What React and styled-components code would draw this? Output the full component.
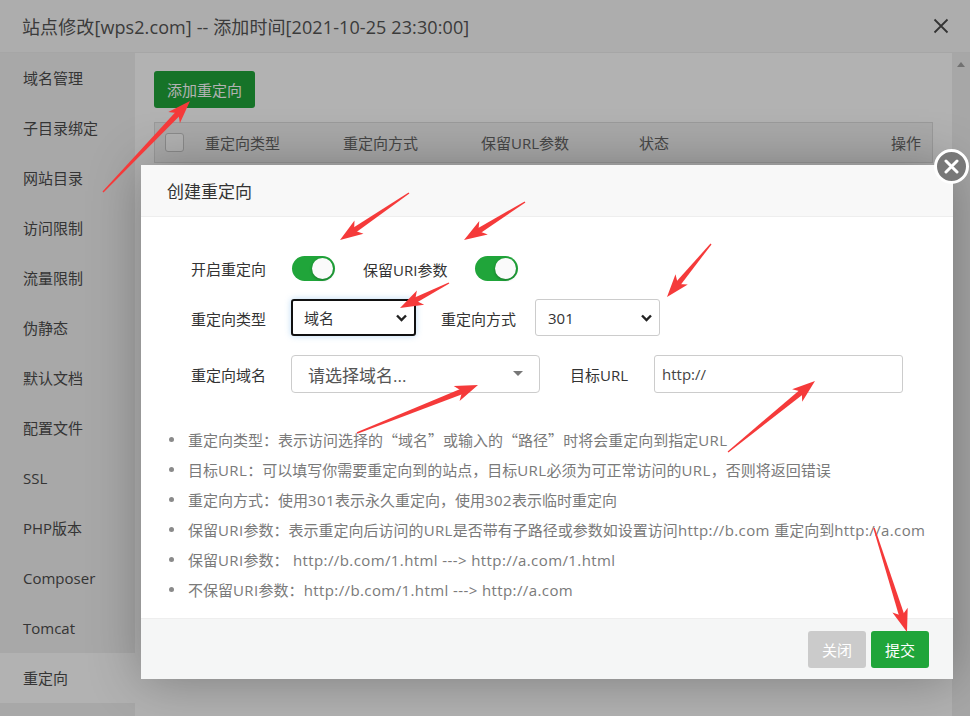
import React from "react";
import styled, { createGlobalStyle } from "styled-components";

const GlobalStyle = createGlobalStyle`
  html, body {
    margin: 0;
    padding: 0;
  }
  body {
    font-family: "Open Sans", "Noto Sans CJK SC", sans-serif;
    color: #333;
    overflow: hidden;
  }
  * {
    box-sizing: border-box;
  }
`;

const menu = [
    "域名管理",
    "子目录绑定",
    "网站目录",
    "访问限制",
    "流量限制",
    "伪静态",
    "默认文档",
    "配置文件",
    "SSL",
    "PHP版本",
    "Composer",
    "Tomcat",
    "重定向",
];

const tips = [
    "重定向类型：表示访问选择的“域名”或输入的“路径”时将会重定向到指定URL",
    "目标URL：可以填写你需要重定向到的站点，目标URL必须为可正常访问的URL，否则将返回错误",
    "重定向方式：使用301表示永久重定向，使用302表示临时重定向",
    "保留URI参数：表示重定向后访问的URL是否带有子路径或参数如设置访问http://b.com 重定向到http://a.com",
    "保留URI参数： http://b.com/1.html ---> http://a.com/1.html",
    "不保留URI参数：http://b.com/1.html ---> http://a.com",
];

// annotation arrows: [tail, tip]
const arrows = [
    [[103, 192], [190, 101]],
    [[409, 193], [340, 240]],
    [[525, 202], [464, 240]],
    [[449, 283], [400, 308]],
    [[711, 244], [667, 297]],
    [[357, 433], [478, 385]],
    [[728, 452], [815, 381]],
    [[874, 528], [907, 632]],
];

const arrowShapes = ([tx, ty], [px, py]) => {
    const len = Math.hypot(px - tx, py - ty);
    const dx = (px - tx) / len;
    const dy = (py - ty) / len;
    const nx = -dy;
    const ny = dx;
    const at = (s, w) =>
        `${(px - dx * s + nx * w).toFixed(1)},${(py - dy * s + ny * w).toFixed(1)}`;
    const shaft = [at(len, 0.7), at(16, 2.8), at(16, -2.8), at(len, -0.7)].join(" ");
    const head = [at(0, 0), at(23, 8), at(17, 0), at(23, -8)].join(" ");
    return { shaft, head };
};

const renderTip = (text) =>
    text.split(/([\x20-\x7e]+|[“”]+)/).map((part, i) => {
        if (!part) return null;
        if (/^[“”]+$/.test(part)) return <Quote key={i}>{part}</Quote>;
        if (/^[\x20-\x7e]+$/.test(part)) return <Latin key={i}>{part}</Latin>;
        return part;
    });

const Chevron = () => (
    <svg width="13" height="13" viewBox="0 0 13 13">
        <path d="M2 4.5 L6.5 9 L11 4.5" fill="none" stroke="#222" strokeWidth="2.4" />
    </svg>
);

const App = () => {
    return (
        <>
            <GlobalStyle />
            <Frame>
                <TitleBar>
                    <Title>站点修改[wps2.com] -- 添加时间[2021-10-25 23:30:00]</Title>
                    <svg width="16" height="16" viewBox="0 0 16 16">
                        <path d="M1.5 1.5 L14.5 14.5 M14.5 1.5 L1.5 14.5" stroke="#4a4a4a" strokeWidth="1.8" />
                    </svg>
                </TitleBar>
                <Main>
                    <Sidebar>
                        {menu.map((item) => (
                            <SideItem key={item} $active={item === "重定向"}>
                                {item}
                            </SideItem>
                        ))}
                    </Sidebar>
                    <Content>
                        <AddButton>添加重定向</AddButton>
                        <TableHead>
                            <CheckCell>
                                <CheckBox />
                            </CheckCell>
                            <HeadCell>重定向类型</HeadCell>
                            <HeadCell>重定向方式</HeadCell>
                            <HeadCell>保留URL参数</HeadCell>
                            <HeadCell>状态</HeadCell>
                            <HeadCell $right>操作</HeadCell>
                        </TableHead>
                    </Content>
                    <ScrollTrack>
                        <ScrollArrow />
                    </ScrollTrack>
                </Main>
                <Shade />
                <Modal>
                    <ModalHeader>创建重定向</ModalHeader>
                    <ModalBody>
                        <FormRow $top={0} $height={36}>
                            <Label $width={101}>开启重定向</Label>
                            <Toggle>
                                <Knob />
                            </Toggle>
                            <Label $width={112} $gap={28} $shift={2}>
                                保留URI参数
                            </Label>
                            <Toggle>
                                <Knob />
                            </Toggle>
                        </FormRow>
                        <FormRow $top={13} $height={37}>
                            <Label $width={100} $shift={2}>
                                重定向类型
                            </Label>
                            <Select $focused>
                                <span>域名</span>
                                <Chevron />
                            </Select>
                            <Label $width={94} $gap={25} $shift={2}>
                                重定向方式
                            </Label>
                            <Select>
                                <span>301</span>
                                <Chevron />
                            </Select>
                        </FormRow>
                        <FormRow $top={19} $height={38}>
                            <Label $width={100} $shift={1}>
                                重定向域名
                            </Label>
                            <DomainPicker>
                                <span>请选择域名...</span>
                                <Caret />
                            </DomainPicker>
                            <Label $width={84} $gap={30} $shift={1}>
                                目标URL
                            </Label>
                            <TextInput>http://</TextInput>
                        </FormRow>
                        <TipList>
                            {tips.map((tip, i) => (
                                <Tip key={i}>
                                    <Bullet />
                                    <span>{renderTip(tip)}</span>
                                </Tip>
                            ))}
                        </TipList>
                    </ModalBody>
                    <ModalFooter>
                        <FooterButton $variant="muted">关闭</FooterButton>
                        <FooterButton>提交</FooterButton>
                    </ModalFooter>
                    <CloseCircle>
                        <svg width="15" height="15" viewBox="0 0 15 15">
                            <path d="M2 2 L13 13 M13 2 L2 13" stroke="#fff" strokeWidth="3" strokeLinecap="round" />
                        </svg>
                    </CloseCircle>
                </Modal>
                <Annotations width="970" height="716" viewBox="0 0 970 716">
                    {arrows.map(([tail, tip], i) => {
                        const { shaft, head } = arrowShapes(tail, tip);
                        return (
                            <g key={i} fill="#f53a3a">
                                <polygon points={shaft} />
                                <polygon points={head} />
                            </g>
                        );
                    })}
                </Annotations>
            </Frame>
        </>
    );
};

const Frame = styled.div`
    position: relative;
    width: 970px;
    height: 716px;
    display: flex;
    flex-direction: column;
    overflow: hidden;
    background: #fff;
`;

const TitleBar = styled.div`
    height: 53px;
    flex-shrink: 0;
    display: flex;
    align-items: center;
    justify-content: space-between;
    padding: 0 21px 0 22px;
    background: #f8f8f8;
    border-bottom: 1px solid #eee;
`;

const Title = styled.div`
    font-size: 18px;
    color: #555;
    letter-spacing: 0.1px;
`;

const Main = styled.div`
    flex: 1;
    display: flex;
    min-height: 0;
`;

const Sidebar = styled.div`
    width: 135px;
    flex-shrink: 0;
    background: #f1f1f1;
`;

const SideItem = styled.div`
    height: 50px;
    line-height: 50px;
    padding-left: 23px;
    font-size: 15px;
    color: #4c4c4c;
    background: ${(p) => (p.$active ? "#fff" : "transparent")};
`;

const Content = styled.div`
    flex: 1;
    background: #fff;
    padding: 18px 19px;
`;

const AddButton = styled.button`
    height: 37px;
    padding: 0 13px;
    border: none;
    border-radius: 3px;
    background: #20a53a;
    color: #fff;
    font-family: inherit;
    font-size: 15px;
`;

const TableHead = styled.div`
    margin-top: 14px;
    height: 41px;
    display: grid;
    grid-template-columns: 40px 138px 138px 158px 1fr auto;
    align-items: center;
    border: 1px solid #ddd;
    background: #f2f2f2;
`;

const CheckCell = styled.div`
    padding-left: 10px;
    display: flex;
`;

const CheckBox = styled.span`
    width: 19px;
    height: 19px;
    border: 1px solid #c8c8c8;
    border-radius: 3px;
    background: #fff;
`;

const HeadCell = styled.div`
    padding: 0 11px 0 10px;
    font-size: 15px;
    color: #666;
    text-align: ${(p) => (p.$right ? "right" : "left")};
`;

const ScrollTrack = styled.div`
    width: 18px;
    flex-shrink: 0;
    background: #efefef;
    display: flex;
    justify-content: center;
    padding-top: 9px;
`;

const ScrollArrow = styled.span`
    width: 0;
    height: 0;
    border-left: 4px solid transparent;
    border-right: 4px solid transparent;
    border-bottom: 5px solid #a3a3a3;
`;

const Shade = styled.div`
    position: absolute;
    inset: 0;
    background: rgba(0, 0, 0, 0.3);
    z-index: 2;
`;

const Modal = styled.div`
    position: absolute;
    left: 141px;
    top: 165px;
    width: 812px;
    height: 514px;
    z-index: 3;
    display: flex;
    flex-direction: column;
    background: #fff;
    box-shadow: 1px 1px 50px rgba(0, 0, 0, 0.3);
`;

const ModalHeader = styled.div`
    height: 52px;
    flex-shrink: 0;
    display: flex;
    align-items: center;
    padding-left: 26px;
    background: #f8f8f8;
    border-bottom: 1px solid #eee;
    font-size: 17px;
    color: #333;
`;

const ModalBody = styled.div`
    flex: 1;
    padding: 33px 0 0 28px;
`;

const FormRow = styled.div`
    display: flex;
    align-items: center;
    margin: ${(p) => p.$top}px 0 0 22px;
    height: ${(p) => p.$height}px;
`;

const Label = styled.div`
    width: ${(p) => p.$width}px;
    margin-left: ${(p) => p.$gap || 0}px;
    padding-top: ${(p) => p.$shift || 0}px;
    flex-shrink: 0;
    font-size: 15px;
    color: #333;
`;

const Toggle = styled.div`
    width: 43px;
    height: 25px;
    border-radius: 13px;
    background: #20a53a;
    display: flex;
    justify-content: flex-end;
    align-items: center;
    padding-right: 2px;
    flex-shrink: 0;
`;

const Knob = styled.span`
    width: 21px;
    height: 21px;
    border-radius: 50%;
    background: #fafafa;
    box-shadow: 0 1px 3px rgba(0, 0, 0, 0.3);
`;

const Select = styled.div`
    width: 125px;
    height: 37px;
    flex-shrink: 0;
    display: flex;
    align-items: center;
    justify-content: space-between;
    padding: 0 6px 0 ${(p) => (p.$focused ? 11 : 12)}px;
    border: ${(p) => (p.$focused ? "2px solid #111" : "1px solid #ccc")};
    border-radius: 3px;
    box-shadow: ${(p) => (p.$focused ? "0 0 6px rgba(102, 175, 233, 0.45)" : "none")};
    font-size: 15px;
    color: #333;
`;

const DomainPicker = styled.div`
    width: 249px;
    height: 38px;
    flex-shrink: 0;
    display: flex;
    align-items: center;
    justify-content: space-between;
    padding: 0 16px 0 16px;
    border: 1px solid #ccc;
    border-radius: 4px;
    font-size: 17px;
    color: #555;
`;

const Caret = styled.span`
    width: 0;
    height: 0;
    border-left: 5px solid transparent;
    border-right: 5px solid transparent;
    border-top: 5px solid #777;
    margin-top: -2px;
`;

const TextInput = styled.div`
    width: 249px;
    height: 38px;
    flex-shrink: 0;
    display: flex;
    align-items: center;
    padding-left: 7px;
    border: 1px solid #ccc;
    border-radius: 3px;
    font-size: 15px;
    color: #444;
`;

const TipList = styled.ul`
    list-style: none;
    margin: 31px 0 0 0;
    padding: 0;
`;

const Tip = styled.li`
    height: 30px;
    display: flex;
    align-items: center;
    font-size: 15px;
    color: #7a7a7a;
    white-space: nowrap;
`;

const Bullet = styled.span`
    width: 5px;
    height: 5px;
    border-radius: 50%;
    background: #8a8a8a;
    margin-right: 14px;
    flex-shrink: 0;
`;

const Latin = styled.span`
    letter-spacing: 0.4px;
`;

const Quote = styled.span`
    font-family: "Noto Sans CJK SC", sans-serif;
`;

const ModalFooter = styled.div`
    height: 61px;
    flex-shrink: 0;
    display: flex;
    align-items: center;
    justify-content: flex-end;
    gap: 5px;
    padding-right: 24px;
    background: #f5f6f6;
    border-top: 1px solid #eee;
`;

const FooterButton = styled.button`
    height: 37px;
    padding: 0 14px;
    border: none;
    border-radius: 3px;
    background: ${(p) => (p.$variant === "muted" ? "#cbcbcb" : "#20a53a")};
    color: #fff;
    font-family: inherit;
    font-size: 15px;
`;

const CloseCircle = styled.div`
    position: absolute;
    top: -16px;
    right: -16px;
    width: 35px;
    height: 35px;
    border-radius: 50%;
    border: 3px solid #fff;
    background: #787878;
    display: flex;
    align-items: center;
    justify-content: center;
`;

const Annotations = styled.svg`
    position: absolute;
    left: 0;
    top: 0;
    z-index: 10;
    pointer-events: none;
`;

export default App;
